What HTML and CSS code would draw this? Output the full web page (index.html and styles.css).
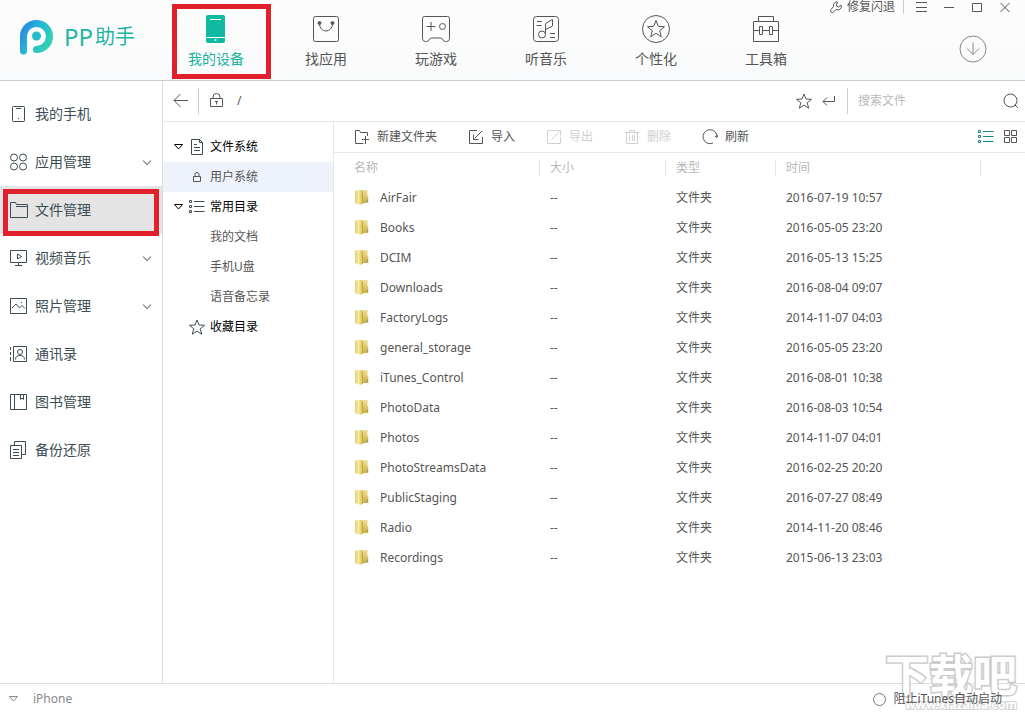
FILE: index.html
```html
<!DOCTYPE html>
<html lang="zh-CN">
<head>
<meta charset="utf-8">
<title>PP助手</title>
<link rel="stylesheet" href="styles.css">
</head>
<body>

<header class="header">
  <div class="brand">
    <svg class="logo" width="36" height="38" viewBox="0 0 36 38">
      <defs>
        <linearGradient id="logoFill" x1="0" y1="0" x2="1" y2="0.6">
          <stop offset="0" stop-color="#2a86e0"/>
          <stop offset="0.45" stop-color="#22b4d8"/>
          <stop offset="1" stop-color="#2fcfb4"/>
        </linearGradient>
      </defs>
      <path fill="none" stroke="url(#logoFill)" stroke-width="7" stroke-linecap="round" d="M4.500 33V17.500A13 13 0 1 1 17.500 31.500"/>
      <circle cx="17.500" cy="18" r="4.500" fill="#22bccb" stroke="none"/>
    </svg>
    <span class="brand-pp">PP</span><span class="brand-cn">助手</span>
  </div>

  <nav class="nav">
    <a href="#" class="nav-item active marked">
      <svg width="28" height="28"><rect x="4" y="0" width="19" height="28" rx="2" fill="#0fb9a2" stroke="none"/><path stroke="#fff" d="M8 4.500h11M4 22.500h19"/><circle cx="13.500" cy="25" r="1" fill="#fff" stroke="none"/></svg>
      <span>我的设备</span>
    </a>
    <a href="#" class="nav-item">
      <svg width="28" height="28"><rect x="1.500" y="1.500" width="25" height="25" rx="2"/><path d="M7.500 8v1a6.500 7 0 0 0 13 0V8"/><circle cx="7.500" cy="8" r="1.500" fill="#555"/><circle cx="20.500" cy="8" r="1.500" fill="#555"/></svg>
      <span>找应用</span>
    </a>
    <a href="#" class="nav-item">
      <svg width="28" height="28"><path d="M2.500 1.500h23a2 2 0 0 1 2 2v20a3 3 0 0 1-3 3h-1c-3 0-2-3.500-5-3.500h-9c-3 0-2 3.500-5 3.500h-1a3 3 0 0 1-3-3v-20a2 2 0 0 1 2-2zM4.500 11.500h9M9 7v9"/><circle cx="20.500" cy="11.500" r="3"/></svg>
      <span>玩游戏</span>
    </a>
    <a href="#" class="nav-item">
      <svg width="28" height="28"><rect x="1.500" y="1.500" width="25" height="25" rx="3"/><path d="M5 6.500h5M4.500 10.500h5M18 18.500h5M18 22.500h5M13.500 19V8.500l7-4V11l-7 3.500"/><circle cx="10" cy="19.500" r="3.500"/></svg>
      <span>听音乐</span>
    </a>
    <a href="#" class="nav-item">
      <svg width="28" height="28"><circle cx="14" cy="14" r="13.500"/><path d="M14 5.500l2.300 5.800 6.200.4-4.800 4 1.600 6.100-5.300-3.400-5.300 3.400 1.600-6.100-4.800-4 6.200-.4z"/></svg>
      <span>个性化</span>
    </a>
    <a href="#" class="nav-item">
      <svg width="28" height="28"><path d="M1.500 6.500h25v20h-25zM6.500 6.500v-5h15v5M1.500 15.500h6M11 15.500h6M21 15.500h5.500M7.500 11.500h3v8h-3zM17.500 11.500h3v8h-3z"/></svg>
      <span>工具箱</span>
    </a>
  </nav>

  <div class="header-right">
    <div class="window-bar">
      <button class="repair">
        <svg width="12" height="12"><path d="M7.500 1a3.500 3.500 0 0 0-4 4.500L1 8.500a1.500 1.500 0 0 0 2.500 2.500L6 8.500A3.500 3.500 0 0 0 11 4L8.500 6 6.500 5V3.500z"/></svg>
        修复闪退
      </button>
      <button class="win" aria-label="菜单"><svg width="12" height="12"><path d="M1 1.500h11M1 6.500h11M1 10.500h11"/></svg></button>
      <button class="win" aria-label="最小化"><svg width="12" height="12"><path d="M1 6.500h10"/></svg></button>
      <button class="win" aria-label="最大化"><svg width="12" height="12"><path d="M1.500 2.500h9v8h-9z"/></svg></button>
      <button class="win" aria-label="关闭"><svg width="12" height="12"><path d="M1.500 2l9 9M10.500 2l-9 9"/></svg></button>
    </div>
    <button class="download" aria-label="下载"><svg width="28" height="28"><circle cx="14" cy="14" r="13"/><path d="M14 7.500v12M8 13.500l6 6 6-6"/></svg></button>
  </div>
</header>

<div class="main">
  <ul class="sidebar">
    <li><a href="#">
      <svg width="18" height="18"><rect x="2.500" y="1.500" width="12" height="15" rx="1"/><path d="M6 3.500h5M8 13.500h1"/></svg>我的手机</a></li>
    <li><a href="#" class="more">
      <svg width="18" height="18"><circle cx="4" cy="4.500" r="3.500"/><circle cx="13" cy="4.500" r="3.500"/><circle cx="4" cy="13.500" r="3.500"/><circle cx="13" cy="13.500" r="3.500"/></svg>应用管理</a></li>
    <li><a href="#" class="current marked">
      <svg width="18" height="18"><path d="M.5 1.500h5l1 2h11v13H.5zM6 5.500h11"/></svg>文件管理</a></li>
    <li><a href="#" class="more">
      <svg width="18" height="18"><path d="M.5 1.500h16v12H.5zM8.500 13.500v3M5 16.500h7M7.500 5v5l4-2.500z"/></svg>视频音乐</a></li>
    <li><a href="#" class="more">
      <svg width="18" height="18"><path d="M.5 1.500h16v15H.5zM2 11l4-4 3.500 4L12 8.500l3 3M11 5.500h1"/></svg>照片管理</a></li>
    <li><a href="#">
      <svg width="18" height="18"><path d="M3.500 1.500h13v15h-13zM.5 2v3M.5 7v3M.5 12v4M5.500 14.500c0-3 2-4 4.500-4s4.500 1 4.500 4"/><circle cx="10" cy="7" r="2.500"/></svg>通讯录</a></li>
    <li><a href="#">
      <svg width="18" height="18"><path d="M.5 1.500h16v15H.5zM4.500 1.500v15M10.500 1.500v5l1.500-1.500 1.500 1.500v-5"/></svg>图书管理</a></li>
    <li><a href="#">
      <svg width="18" height="18"><path d="M4.500 4V.5h11v13h-4M.5 4.500h11v13H.5zM3 8.500h6M3 11.500h6M3 14.500h6"/></svg>备份还原</a></li>
  </ul>

  <div class="content">
    <div class="address">
      <button class="back" aria-label="返回"><svg width="16" height="16"><path d="M1 7.500h14M7.500 1L1 7.500 7.500 14"/></svg></button>
      <svg class="lock" width="14" height="16"><path d="M.5 5.500h12v8H.5zM3 5.500V4a3.500 3.500 0 0 1 7 0v1.500M5 8.500h3M6.500 8.500v3"/></svg>
      <input class="path" type="text" value="/" aria-label="路径">
      <button aria-label="收藏"><svg width="16" height="16"><use href="#star"/></svg></button>
      <button class="go" aria-label="转到"><svg width="14" height="16"><path d="M12.500 3v5.500H1M5 4.500l-4 4 4 4"/></svg></button>
      <div class="search">
        <input type="text" placeholder="搜索文件" aria-label="搜索文件">
        <button aria-label="搜索"><svg width="16" height="16"><circle cx="7.500" cy="7.500" r="6.500"/><path d="M12 12l3 3"/></svg></button>
      </div>
    </div>

    <div class="browser">
      <ul class="tree">
        <li class="group"><a href="#">
          <svg class="arrow" width="9" height="6"><path d="M.5.5h8l-4 4.500z"/></svg>
          <svg width="16" height="16"><path d="M2.500.5h8l3 3v12h-11zM10.500.5v3h3M5 5.500h3M5 8.500h6M5 11.500h6"/></svg>文件系统</a></li>
        <li class="selected"><a href="#">
          <svg width="10" height="12"><path d="M1.500 5.500h7v5h-7zM3 5.500V3.500a2 2 0 0 1 4 0v2"/></svg>用户系统</a></li>
        <li class="group"><a href="#">
          <svg class="arrow" width="9" height="6"><path d="M.5.5h8l-4 4.500z"/></svg>
          <svg width="16" height="16"><use href="#list"/></svg>常用目录</a></li>
        <li><a href="#">我的文档</a></li>
        <li><a href="#">手机U盘</a></li>
        <li><a href="#">语音备忘录</a></li>
        <li class="group no-arrow"><a href="#">
          <svg width="16" height="16"><use href="#star"/></svg>收藏目录</a></li>
      </ul>

      <div class="files">
        <div class="actions">
          <button><svg width="16" height="16"><path d="M9.500 14.500h-8v-13h4l1 2h7V7M8 10.500h7M11.500 7v8"/></svg>新建文件夹</button>
          <button><svg width="16" height="16"><path d="M9 1.500H1.500v13h13V8M14 2L6.500 9.500M5.500 5.500v5h5"/></svg>导入</button>
          <button disabled><svg width="16" height="16"><path d="M9 1.500H1.500v13h13V8M5.500 10.500l8-8M9.500 1.500h5v5"/></svg>导出</button>
          <button disabled><svg width="16" height="16"><path d="M1 3.500h14M2.500 3.500v11h11v-11M5.500 3.500v-2h5v2M5.500 6v6M8.500 6v6M10.500 6v6"/></svg>删除</button>
          <button><svg width="16" height="16"><path d="M11 14a7 7 0 1 1 4-6M13 7l2 1.500L16 6"/></svg>刷新</button>
          <div class="views">
            <button class="on" aria-label="列表"><svg width="16" height="16"><use href="#list"/></svg></button>
            <button aria-label="图标"><svg width="14" height="14"><path d="M.5.5h5v5h-5zM7.500.5h5v5h-5zM.5 7.500h5v5h-5zM7.500 7.500h5v5h-5z"/></svg></button>
          </div>
        </div>

        <table>
          <thead>
            <tr>
              <th class="name"><span>名称</span></th>
              <th class="size"><span>大小</span></th>
              <th class="type"><span>类型</span></th>
              <th class="time"><span>时间</span></th>
              <th></th>
            </tr>
          </thead>
          <tbody>
            <tr><td><svg class="folder"><use href="#folder"/></svg>AirFair</td><td>--</td><td>文件夹</td><td>2016-07-19 10:57</td><td></td></tr>
            <tr><td><svg class="folder"><use href="#folder"/></svg>Books</td><td>--</td><td>文件夹</td><td>2016-05-05 23:20</td><td></td></tr>
            <tr><td><svg class="folder"><use href="#folder"/></svg>DCIM</td><td>--</td><td>文件夹</td><td>2016-05-13 15:25</td><td></td></tr>
            <tr><td><svg class="folder"><use href="#folder"/></svg>Downloads</td><td>--</td><td>文件夹</td><td>2016-08-04 09:07</td><td></td></tr>
            <tr><td><svg class="folder"><use href="#folder"/></svg>FactoryLogs</td><td>--</td><td>文件夹</td><td>2014-11-07 04:03</td><td></td></tr>
            <tr><td><svg class="folder"><use href="#folder"/></svg>general_storage</td><td>--</td><td>文件夹</td><td>2016-05-05 23:20</td><td></td></tr>
            <tr><td><svg class="folder"><use href="#folder"/></svg>iTunes_Control</td><td>--</td><td>文件夹</td><td>2016-08-01 10:38</td><td></td></tr>
            <tr><td><svg class="folder"><use href="#folder"/></svg>PhotoData</td><td>--</td><td>文件夹</td><td>2016-08-03 10:54</td><td></td></tr>
            <tr><td><svg class="folder"><use href="#folder"/></svg>Photos</td><td>--</td><td>文件夹</td><td>2014-11-07 04:01</td><td></td></tr>
            <tr><td><svg class="folder"><use href="#folder"/></svg>PhotoStreamsData</td><td>--</td><td>文件夹</td><td>2016-02-25 20:20</td><td></td></tr>
            <tr><td><svg class="folder"><use href="#folder"/></svg>PublicStaging</td><td>--</td><td>文件夹</td><td>2016-07-27 08:49</td><td></td></tr>
            <tr><td><svg class="folder"><use href="#folder"/></svg>Radio</td><td>--</td><td>文件夹</td><td>2014-11-20 08:46</td><td></td></tr>
            <tr><td><svg class="folder"><use href="#folder"/></svg>Recordings</td><td>--</td><td>文件夹</td><td>2015-06-13 23:03</td><td></td></tr>
          </tbody>
        </table>
      </div>
    </div>
  </div>
</div>

<footer class="footer">
  <button class="device"><svg width="10" height="6"><path d="M.5.5h8l-4 4.500z"/></svg>iPhone</button>
  <label class="block-itunes"><input type="checkbox">阻止iTunes自动启动</label>
</footer>

<div class="watermark">
  <div class="watermark-name">下载吧</div>
  <div class="watermark-url">www.xiazaiba.com</div>
</div>

<!-- shared icons -->
<svg class="icons" width="0" height="0">
  <defs>
    <linearGradient id="folderFront" x1="0" y1="0" x2="1" y2="0">
      <stop offset="0" stop-color="#e3cf74"/>
      <stop offset="0.5" stop-color="#f6eaa4"/>
      <stop offset="1" stop-color="#d8bd55"/>
    </linearGradient>
    <linearGradient id="folderBack" x1="0" y1="0" x2="0" y2="1">
      <stop offset="0" stop-color="#efe097"/>
      <stop offset="1" stop-color="#cfae42"/>
    </linearGradient>
  </defs>
  <symbol id="star" viewBox="0 0 16 16"><path d="M8 1l2 5 5.500.3-4.300 3.500 1.500 5.400L8 12.200l-4.700 3 1.500-5.400L.5 6.300 6 6z"/></symbol>
  <symbol id="list" viewBox="0 0 16 16"><path d="M.5 1.500h2v2h-2zM.5 6.500h2v2h-2zM.5 11.500h2v2h-2zM5 2.500h10.500M5 7.500h10.500M5 12.500h10.500"/></symbol>
  <symbol id="folder" viewBox="0 0 14 16">
    <path fill="url(#folderBack)" stroke="none" d="M5 1h7.500v6l.8.500V14H5z"/>
    <path fill="#8a9a8e" stroke="none" d="M11.800 10.500h1V13h-1z"/>
    <path fill="url(#folderFront)" stroke="none" d="M0 1.500L6 1l1.500 1.500v12.200L5.500 16 0 14z"/>
    <path fill="none" stroke="#c9a940" d="M7.500 2.500V15"/>
  </symbol>
</svg>

</body>
</html>
```

FILE: styles.css
```css
* {
  box-sizing: border-box;
}

body {
  margin: 0;
  min-height: 100vh;
  display: flex;
  flex-direction: column;
  position: relative;
  background: #fff;
  color: #555;
  font-family: "Noto Sans", "Noto Sans CJK SC", sans-serif;
  font-size: 12px;
  line-height: 18px;
}

a {
  color: inherit;
  text-decoration: none;
}

ul {
  list-style: none;
  margin: 0;
  padding: 0;
}

button {
  display: flex;
  align-items: center;
  padding: 0;
  border: 0;
  background: none;
  color: inherit;
  font: inherit;
  cursor: pointer;
}

input {
  border: 0;
  outline: none;
  background: none;
  font: inherit;
  color: #555;
  min-width: 0;
}

svg {
  flex: none;
  fill: none;
  stroke: currentColor;
}

/* header */
.header {
  display: flex;
  height: 81px;
  border-bottom: 1px solid #ccc;
  background: linear-gradient(#fdfdfd, #f9fafb);
}

.brand {
  display: flex;
  align-items: center;
  width: 161px;
  padding: 0 0 6px 19px;
  color: #1fb5a5;
}

.brand-pp {
  margin-left: 9px;
  font-size: 24px;
}

.brand-cn {
  margin-left: 2px;
  font-size: 20px;
}

.nav {
  display: flex;
}

.nav-item {
  display: flex;
  flex-direction: column;
  align-items: center;
  position: relative;
  width: 110px;
  padding-top: 15px;
  font-size: 14px;
  line-height: 20px;
}

.nav-item span {
  margin-top: 6px;
}

.nav-item.active {
  color: #17b39d;
}

.marked::after {
  content: "";
  position: absolute;
  border: 5px solid #e0202a;
}

.nav-item.marked::after {
  top: 4px;
  right: 0;
  bottom: 1px;
  left: 11px;
}

.header-right {
  display: flex;
  flex-direction: column;
  align-items: flex-end;
  margin-left: auto;
}

.window-bar {
  display: flex;
  align-items: center;
  height: 14px;
  padding-right: 14px;
  gap: 16px;
}

.repair {
  gap: 5px;
  height: 14px;
  padding-right: 8px;
  margin-right: -5px;
  border-right: 1px solid #ccc;
}

.download {
  margin: 21px 38px 0 0;
  color: #888;
}

/* left menu */
.main {
  display: flex;
  flex: 1;
}

.sidebar {
  width: 163px;
  padding-top: 9px;
  border-right: 1px solid #ddd;
}

.sidebar a {
  display: flex;
  align-items: center;
  position: relative;
  height: 48px;
  padding-left: 10px;
  gap: 7px;
  color: #3c4d55;
  font-size: 14px;
}

.sidebar .current {
  background: #e4e4e4;
}

.sidebar .marked::after {
  top: 3px;
  right: 3px;
  bottom: -2px;
  left: 3px;
}

.sidebar .more::after {
  content: "";
  box-sizing: border-box;
  width: 6px;
  height: 6px;
  margin: 0 12px 3px auto;
  border: solid #777;
  border-width: 0 1px 1px 0;
  transform: rotate(45deg);
}

/* address bar */
.content {
  display: flex;
  flex-direction: column;
  flex: 1;
  min-width: 0;
}

.address {
  display: flex;
  align-items: center;
  height: 41px;
  border-bottom: 1px solid #e8e8e8;
}

.back {
  height: 26px;
  padding: 0 9px 0 10px;
  border-right: 1px solid #ccc;
}

.lock {
  margin-left: 11px;
}

.path {
  flex: 1;
  padding: 0 13px;
}

.go {
  margin: 0 11px 0 10px;
}

.search {
  display: flex;
  align-items: center;
  width: 178px;
  height: 26px;
  padding: 0 6px 0 10px;
  border-left: 1px solid #ccc;
}

.search input {
  flex: 1;
  padding: 0;
}

.search input::placeholder {
  color: #b8b8b8;
}

/* directory tree */
.browser {
  display: flex;
  flex: 1;
}

.tree {
  width: 171px;
  padding-top: 10px;
  border-right: 1px solid #e8e8e8;
}

.tree a {
  display: flex;
  align-items: center;
  height: 30px;
  padding-left: 47px;
}

.tree .selected {
  background: #edf2fb;
}

.tree .selected a {
  padding-left: 29px;
  gap: 8px;
}

.tree .group a {
  padding-left: 11px;
  gap: 5px;
  color: #000;
}

.tree .group svg {
  color: #3c4d55;
}

.tree .group .arrow {
  color: #000;
  margin-right: 1px;
}

.tree .no-arrow a {
  padding-left: 26px;
}

/* file list */
.files {
  flex: 1;
  min-width: 0;
}

.actions {
  display: flex;
  align-items: center;
  height: 31px;
  padding: 0 7px 0 20px;
  gap: 31px;
  border-bottom: 1px solid #e8e8e8;
}

.actions button {
  gap: 7px;
}

.actions button:disabled {
  color: #d0d0d0;
}

.views {
  display: flex;
  gap: 10px;
  margin-left: auto;
}

.views .on {
  color: #12877c;
}

table {
  width: 100%;
  table-layout: fixed;
  border-collapse: collapse;
}

th,
td {
  height: 30px;
  padding: 0 0 0 10px;
  text-align: left;
  font-weight: normal;
}

th {
  padding-right: 0;
  color: #b8b8b8;
}

th span {
  display: block;
  height: 16px;
  line-height: 16px;
  border-right: 1px solid #e4e4e4;
}

th:first-child,
td:first-child {
  padding-left: 20px;
}

.name { width: 206px; }
.size { width: 126px; }
.type { width: 110px; }
.time { width: 205px; }

.folder {
  width: 14px;
  height: 16px;
  margin: 0 11px 2px 1px;
  vertical-align: middle;
}

/* status bar */
.footer {
  display: flex;
  align-items: center;
  justify-content: space-between;
  height: 31px;
  padding: 0 23px 0 9px;
  border-top: 1px solid #ddd;
}

.device {
  gap: 14px;
  color: #888;
}

.block-itunes {
  display: flex;
  align-items: center;
  gap: 7px;
  position: relative;
  z-index: 1;
}

.block-itunes input {
  appearance: none;
  width: 13px;
  height: 13px;
  margin: 0;
  border: 1px solid #777;
  border-radius: 50%;
}

.watermark {
  position: absolute;
  right: 8px;
  bottom: 2px;
  color: #fff;
  font-weight: bold;
  text-align: right;
  pointer-events: none;
  paint-order: stroke fill;
}

.watermark-name {
  font-size: 44px;
  line-height: 46px;
  -webkit-text-stroke: 3px #ccc;
}

.watermark-url {
  font-size: 12px;
  line-height: 14px;
  -webkit-text-stroke: 2px #d4d4d4;
}

.icons {
  position: absolute;
}
```
